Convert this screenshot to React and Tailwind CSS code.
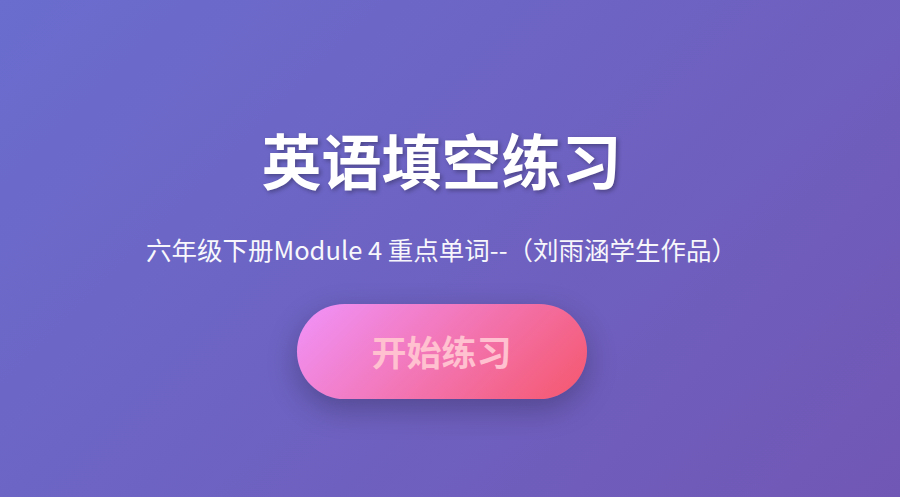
import React from "react";

const App = () => {
  return (
    <div
      className="w-[900px] h-[497px] overflow-hidden bg-[linear-gradient(135deg,#6a6dce_0%,#7157b5_100%)] text-white"
      style={{ fontFamily: '"Noto Sans CJK SC", "Noto Sans", sans-serif' }}
    >
      <div className="w-[883px] flex flex-col items-center pt-[123px]">
        <h1 className="text-[60px] leading-[72px] font-bold [text-shadow:2px_2px_4px_rgba(0,0,0,0.3)]">
          英语填空练习
        </h1>
        <p className="mt-[36px] text-[25.5px] leading-[36px] opacity-95">
          六年级下册Module 4 重点单词--（刘雨涵学生作品）
        </p>
        <button
          className="mt-[37px] w-[290px] h-[95px] rounded-full bg-[linear-gradient(135deg,#f093fb_0%,#f5576c_100%)] text-[#ffc0cf] text-[35px] font-bold shadow-[0_10px_30px_rgba(0,0,0,0.25)]"
        >
          开始练习
        </button>
      </div>
    </div>
  );
};

export default App;
